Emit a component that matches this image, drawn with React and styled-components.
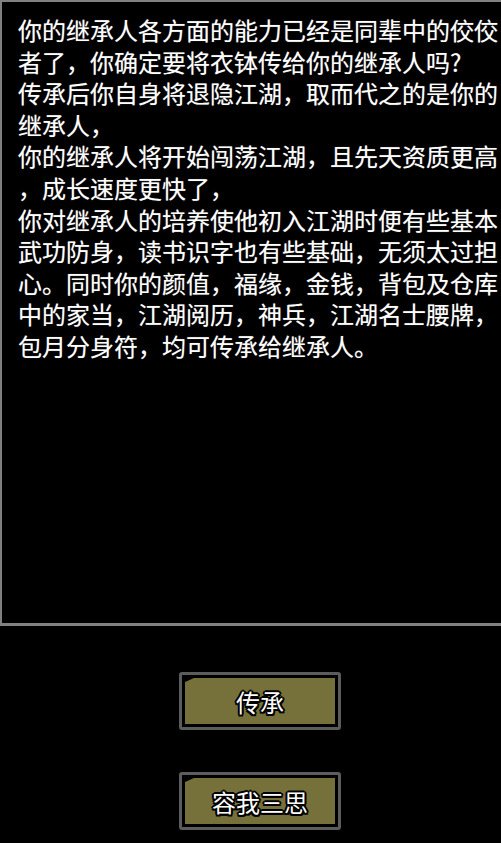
import React from 'react'
import styled, { createGlobalStyle } from 'styled-components'

const lines = [
  '你的继承人各方面的能力已经是同辈中的佼佼',
  '者了，你确定要将衣钵传给你的继承人吗?',
  '传承后你自身将退隐江湖，取而代之的是你的',
  '继承人，',
  '你的继承人将开始闯荡江湖，且先天资质更高',
  '，成长速度更快了，',
  '你对继承人的培养使他初入江湖时便有些基本',
  '武功防身，读书识字也有些基础，无须太过担',
  '心。同时你的颜值，福缘，金钱，背包及仓库',
  '中的家当，江湖阅历，神兵，江湖名士腰牌，',
  '包月分身符，均可传承给继承人。',
]

const GlobalStyle = createGlobalStyle`
  html, body {
    margin: 0;
    background: #000;
  }
  body {
    font-family: "Noto Sans CJK SC", "Noto Sans", sans-serif;
  }
`

const Screen = styled.div`
  width: 501px;
  height: 843px;
  background: #000;
  overflow: hidden;
  display: flex;
  flex-direction: column;
`

const Panel = styled.div`
  height: 626px;
  box-sizing: border-box;
  border: 2px solid #808080;
  border-bottom-width: 3px;
  border-right: none;
  padding: 12px 0 0 16px;
`

const Line = styled.div`
  color: #fff;
  font-size: 24px;
  line-height: 31.6px;
  white-space: nowrap;
  text-shadow: 0 0 1px rgba(255, 255, 255, 0.45);
`

const Actions = styled.div`
  display: flex;
  flex-direction: column;
  align-items: center;
  gap: 42px;
  padding: 46px 0 0 19px;
`

const Frame = styled.button`
  width: 162px;
  height: 58px;
  box-sizing: border-box;
  border: 3px solid #5c5c5c;
  border-radius: 3px;
  background: #000;
  padding: 3px;
  cursor: pointer;
`

const Face = styled.div`
  height: 100%;
  background: #76713a;
  clip-path: polygon(9px 0, 100% 0, 100% 100%, 0 100%, 0 4px);
  display: flex;
  align-items: center;
  justify-content: center;
  color: #fff;
  font-family: "Noto Sans CJK SC", "Noto Sans", sans-serif;
  font-size: 24px;
  text-shadow:
    2px 0 0 #000, -2px 0 0 #000, 0 2px 0 #000, 0 -2px 0 #000,
    1.5px 1.5px 0 #000, -1.5px 1.5px 0 #000, 1.5px -1.5px 0 #000, -1.5px -1.5px 0 #000;
`

const ActionButton = ({ label }) => (
  <Frame>
    <Face>{label}</Face>
  </Frame>
)

export default function App() {
  return (
    <Screen>
      <GlobalStyle />
      <Panel>
        {lines.map((text, i) => (
          <Line key={i}>{text}</Line>
        ))}
      </Panel>
      <Actions>
        <ActionButton label="传承" />
        <ActionButton label="容我三思" />
      </Actions>
    </Screen>
  )
}
